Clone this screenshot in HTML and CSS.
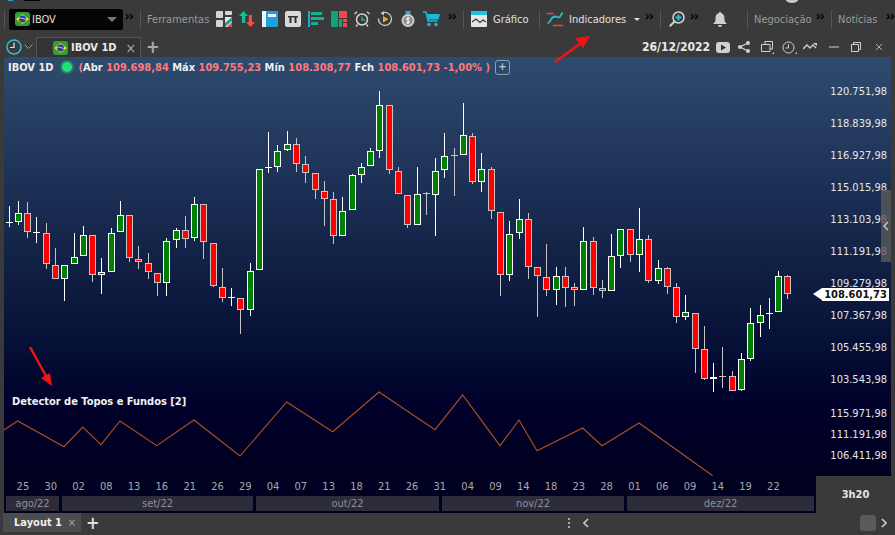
FILE: index.html
```html
<!DOCTYPE html>
<html lang="en">

<head>
    <meta charset="UTF-8">
    <meta name="viewport" content="width=device-width, initial-scale=1.0">
    <title>IBOV 1D</title>
    <link rel="stylesheet" href="styles.css">
</head>

<body>
    <!-- Shared small icons -->
    <svg class="defs" width="0" height="0">
        <symbol id="more" viewBox="0 0 9 7">
            <path d="M1 1l2.500 2.500L1 6M5 1l2.500 2.500L5 6" fill="none" stroke="#000" stroke-width="1.500"/>
            <path d="M1 1l2.500 2.500M5 1l2.500 2.500" fill="none" stroke="#5a1a1a" stroke-width=".6"/>
        </symbol>
        <symbol id="flag" viewBox="0 0 15 14">
            <rect width="15" height="14" rx="3" fill="#2f9e3f"/>
            <path d="M7.500 2L14 7l-6.500 5L1 7z" fill="#f4d21f"/>
            <circle cx="7.500" cy="7" r="3.400" fill="#27408f"/>
            <path d="M4.300 6.200q3.500-.5 6.300 1.500" fill="none" stroke="#fff" stroke-width=".7"/>
        </symbol>
    </svg>

    <!-- Top toolbar -->
    <div class="toolbar">
        <div class="sec sec-asset">
            <div class="combo">
                <svg class="flag"><use href="#flag"/></svg>
                <span class="combo-name">IBOV</span>
                <span class="caret"></span>
            </div>
            <svg class="more"><use href="#more"/></svg>
        </div>

        <div class="sec sec-tools">
            <span class="tool-label">Ferramentas</span>
            <div class="tool-icons">
                <svg class="ico" viewBox="0 0 16 16">
                    <rect y="0" width="7" height="7" rx="1" fill="#d5d5d5"/>
                    <rect x="9" y="0" width="7" height="4" rx="1" fill="#d5d5d5"/>
                    <rect y="9" width="7" height="7" rx="1" fill="#d5d5d5"/>
                    <rect x="9" y="6" width="7" height="10" fill="#e8e8e8"/>
                    <path d="M9 16V12l7-6v4z" fill="#1aa38a"/>
                    <path d="M11 16l5-5v5z" fill="#ef4a4a"/>
                </svg>
                <svg class="ico" viewBox="0 0 16 16">
                    <path d="M4.500 0L9 5H6.200v7H3V5H0z" fill="#12c09a"/>
                    <path d="M11.500 16L7 11h2.800V4H13v7h3z" fill="#f0503f"/>
                </svg>
                <svg class="ico" viewBox="0 0 16 16">
                    <rect width="16" height="16" rx="1" fill="#1e9fe0"/>
                    <rect x="0" width="4" height="16" fill="#e9f6fc"/>
                    <rect x="6" y="3" width="8" height="3" fill="#e9f6fc"/>
                </svg>
                <svg class="ico" viewBox="0 0 16 16">
                    <rect width="16" height="16" rx="2" fill="#d8d8d8"/>
                    <path d="M3 5h10v1.500h-1.500V12h-2V6.500h-3V12h-2V6.500H3z" fill="#333"/>
                </svg>
                <svg class="ico" viewBox="0 0 16 16">
                    <rect width="2" height="16" fill="#1ea7e0"/>
                    <rect x="3" y="1" width="11" height="3" fill="#0fb58f"/>
                    <rect x="3" y="6" width="13" height="3" fill="#0fb58f"/>
                    <rect x="3" y="11" width="7" height="3" fill="#0fb58f"/>
                </svg>
                <svg class="ico" viewBox="0 0 16 16">
                    <rect width="7" height="16" rx="1" fill="#0fa27c"/>
                    <rect x="8" width="8" height="7" fill="#ef4a4a"/>
                    <rect x="8" y="8" width="3" height="8" fill="#0fa27c"/>
                    <rect x="12" y="8" width="4" height="3" fill="#ef4a4a"/>
                    <rect x="12" y="12" width="4" height="4" fill="#ef4a4a"/>
                </svg>
                <svg class="ico" viewBox="0 0 16 16">
                    <circle cx="8" cy="8.500" r="5.500" fill="none" stroke="#d5d5d5" stroke-width="1.500"/>
                    <path d="M8 5.500v3.500h3" fill="none" stroke="#12c09a" stroke-width="1.300"/>
                    <path d="M0.500 3L3 0.700M15.500 3L13 0.700M3.500 13.500L2 15.500M12.500 13.500L14 15.500" stroke="#d5d5d5" stroke-width="1.300"/>
                </svg>
                <svg class="ico" viewBox="0 0 16 16">
                    <path d="M5 2.200a6.500 6.500 0 1 1-3.500 5.300" fill="none" stroke="#c9c9c9" stroke-width="1.300"/>
                    <path d="M7 0v4.500L3.500 2.200z" fill="#c9c9c9"/>
                    <path d="M6 5l5.500 3.300L6 11.500z" fill="#e8ad22"/>
                </svg>
                <svg class="ico" viewBox="0 0 16 16">
                    <path d="M5 0h6l-1 4H6z" fill="#2aa7c9"/>
                    <circle cx="8" cy="9.500" r="6.500" fill="#cfcfcf"/>
                    <circle cx="8" cy="9.500" r="4.600" fill="#8b8b8b"/>
                    <path d="M10 7.500q-2-1.200-3.200 0t1.200 2 1.200 2-3.200 0M8 5.800v7.400" fill="none" stroke="#fff" stroke-width="1"/>
                </svg>
                <svg class="ico ico-cart" viewBox="0 0 17 16">
                    <path d="M0 1h3l2 9h9.500" fill="none" stroke="#1fb6d8" stroke-width="1.500"/>
                    <path d="M4 3h13l-1.500 5.500H5z" fill="#1fb6d8"/>
                    <circle cx="6" cy="13.500" r="1.800" fill="#1fb6d8"/>
                    <circle cx="13" cy="13.500" r="1.800" fill="#1fb6d8"/>
                </svg>
            </div>
            <svg class="more"><use href="#more"/></svg>
        </div>

        <div class="sec sec-chart">
            <svg class="ico" viewBox="0 0 16 16">
                <rect width="16" height="16" rx="1" fill="#e6e6e6"/>
                <path d="M0 1a1 1 0 0 1 1-1h14a1 1 0 0 1 1 1v3H0z" fill="#1fc0e8"/>
                <path d="M1 11l4-3 4 3.500 3-2.500 3 2" fill="none" stroke="#333" stroke-width="1.200"/>
            </svg>
            <span class="tool-text">Gráfico</span>
        </div>

        <div class="sec sec-ind">
            <svg class="ico" viewBox="0 0 16 16">
                <path d="M0 2.500h6.500M6 14.500h10" stroke="#ef4a4a" stroke-width="1.500"/>
                <path d="M0.500 12.500c3.500-1 3-7 7.500-7s3 4 7.500-4" fill="none" stroke="#1fc0c8" stroke-width="1.800"/>
            </svg>
            <span class="tool-text">Indicadores</span>
            <span class="caret caret-light"></span>
            <svg class="more"><use href="#more"/></svg>
        </div>

        <div class="sec sec-search">
            <svg class="ico" viewBox="0 0 16 16">
                <circle cx="9.500" cy="6.500" r="5.500" fill="none" stroke="#d5d5d5" stroke-width="1.500"/>
                <path d="M5.500 10.500L.8 15.200" stroke="#d5d5d5" stroke-width="2"/>
                <path d="M9.500 3.500v6M6.500 6.500h6" stroke="#1fc0e8" stroke-width="2"/>
            </svg>
            <svg class="more"><use href="#more"/></svg>
            <svg class="ico bell" viewBox="0 0 14 15">
                <path d="M7 0a1.200 1.200 0 0 1 1.200 1.300C11 2 11.500 4.500 11.500 7c0 2.500 1 3.500 2.500 5H0c1.500-1.500 2.500-2.500 2.500-5 0-2.500.5-5 3.300-5.700A1.200 1.200 0 0 1 7 0zM5 13h4a2 2 0 0 1-4 0z" fill="#cfcfcf"/>
            </svg>
        </div>

        <div class="sec sec-neg">
            <span class="tool-label">Negociação</span>
            <svg class="more"><use href="#more"/></svg>
        </div>

        <div class="sec sec-news">
            <span class="tool-label">Notícias</span>
            <svg class="more"><use href="#more"/></svg>
        </div>
    </div>

    <!-- Chart tab row -->
    <div class="tabbar">
        <svg class="clock" viewBox="0 0 16 16">
            <circle cx="8" cy="8" r="7" fill="none" stroke="#2cc0e0" stroke-width="1.500"/>
            <path d="M8 3.500V8.500H4" fill="none" stroke="#e0e0e0" stroke-width="1.200"/>
        </svg>
        <svg class="chevron" viewBox="0 0 9 5"><path d="M.5.500l4 4 4-4" fill="none" stroke="#999"/></svg>
        <div class="tab">
            <svg class="flag"><use href="#flag"/></svg>
            <span class="tab-name">IBOV 1D</span>
            <span class="tab-close">×</span>
        </div>
        <span class="tab-add">+</span>
        <div class="win-tools">
            <span class="date">26/12/2022</span>
            <svg class="wt wt-video" viewBox="0 0 14 11">
                <rect width="14" height="11" rx="3" fill="#d0d0d0"/>
                <path d="M5 2.500l5 3-5 3z" fill="#333"/>
            </svg>
            <svg class="wt wt-share" viewBox="0 0 12 12">
                <path d="M10 2L2 6l8 4" fill="none" stroke="#d0d0d0" stroke-width="1.300"/>
                <circle cx="10" cy="2" r="2" fill="#d0d0d0"/>
                <circle cx="2" cy="6" r="2" fill="#d0d0d0"/>
                <circle cx="10" cy="10" r="2" fill="#d0d0d0"/>
            </svg>
            <svg class="wt wt-layers" viewBox="0 0 13 13">
                <path d="M4 3V.5h7.500V8H9M.5 3.500H9v7H.5z" fill="none" stroke="#d0d0d0"/>
                <path d="M13 11v2h-2z" fill="#d0d0d0"/>
            </svg>
            <svg class="wt wt-time" viewBox="0 0 15 13">
                <circle cx="6.500" cy="6.500" r="5.500" fill="none" stroke="#d0d0d0"/>
                <path d="M6.500 3v4H3.500" fill="none" stroke="#d0d0d0"/>
                <path d="M15 11v2h-2z" fill="#d0d0d0"/>
            </svg>
            <svg class="wt wt-trend" viewBox="0 0 15 10">
                <path d="M0 7l4-4 3 3 3-3 3 3" fill="none" stroke="#d0d0d0" stroke-width="1.300"/>
                <path d="M10 1h4v3z" fill="#d0d0d0"/>
            </svg>
            <svg class="wt wt-min" viewBox="0 0 10 10"><path d="M0 5h10" stroke="#d0d0d0"/></svg>
            <svg class="wt wt-restore" viewBox="0 0 10 10">
                <path d="M2.500 2V.5h7v7H8M.5 2.500h7v7h-7z" fill="none" stroke="#d0d0d0"/>
            </svg>
            <svg class="wt wt-close" viewBox="0 0 10 10"><path d="M1 1l8 8M9 1l-8 8" stroke="#d0d0d0"/></svg>
        </div>
    </div>

    <!-- Chart -->
    <div class="chart-row">
        <div class="chart">
            <svg id="candles" class="plot" viewBox="4 57 887 456">
                <polyline class="detector" points="4,430 17.700,421 64,446.700 82.700,427 101,444.700 120,421 156.700,445.700 194,420 240,456 286.700,402 332.700,431.700 379,392 435,429.700 462.700,395 500,445.700 519,420 537,450.700 582.700,428 602,445.700 639,423 712.700,475.700"/>
            </svg>

            <div class="legend">
                <span class="legend-name">IBOV 1D</span>
                <span class="live-dot"></span>
                <span class="ohlc"><i>(</i>Abr <i>109.698,84</i> Máx <i>109.755,23</i> Mín <i>108.308,77</i> Fch <i>108.601,73 -1,00% )</i></span>
                <span class="legend-add">+</span>
            </div>

            <div class="indicator-name">Detector de Topos e Fundos [2]</div>

            <div class="prices prices-main">
                <span>120.751,98</span>
                <span>118.839,98</span>
                <span>116.927,98</span>
                <span>115.015,98</span>
                <span>113.103,98</span>
                <span>111.191,98</span>
                <span>109.279,98</span>
                <span>107.367,98</span>
                <span>105.455,98</span>
                <span>103.543,98</span>
            </div>
            <div class="prices prices-sub">
                <span>115.971,98</span>
                <span>111.191,98</span>
                <span>106.411,98</span>
            </div>

            <div class="last-price">108.601,73</div>
            <div class="side-handle"><svg viewBox="0 0 6 10"><path d="M5 1L1 5l4 4" fill="none" stroke="#c8c8c8" stroke-width="1.500"/></svg></div>

            <div class="time-axis">
                <div class="days">
                    <span>25</span><span>30</span><span>02</span><span>08</span><span>13</span><span>16</span><span>21</span>
                    <span>26</span><span>29</span><span>04</span><span>07</span><span>13</span><span>18</span><span>21</span>
                    <span>26</span><span>31</span><span>04</span><span>09</span><span>14</span><span>18</span><span>23</span>
                    <span>28</span><span>01</span><span>06</span><span>09</span><span>14</span><span>19</span><span>22</span>
                </div>
                <div class="months">
                    <span class="m-ago">ago/22</span>
                    <span class="m-set">set/22</span>
                    <span class="m-out">out/22</span>
                    <span class="m-nov">nov/22</span>
                    <span class="m-dez">dez/22</span>
                </div>
            </div>

            <div class="clock-box">3h20</div>
        </div>
    </div>

    <!-- Layout tabs -->
    <div class="layoutbar">
        <div class="layout-tab">
            <span class="layout-name">Layout 1</span>
            <span class="layout-close">×</span>
        </div>
        <span class="layout-add">+</span>
        <span class="dots"></span>
        <svg class="nav nav-left" viewBox="0 0 6 10"><path d="M5 1L1 5l4 4" fill="none" stroke="#ccc" stroke-width="1.600"/></svg>
        <span class="thumb"></span>
        <svg class="nav" viewBox="0 0 6 10"><path d="M1 1l4 4-4 4" fill="none" stroke="#ccc" stroke-width="1.600"/></svg>
    </div>

    <!-- Red arrows drawn over the screenshot, plus the bits of another window along the top edge -->
    <svg class="marks" viewBox="0 0 895 535">
        <rect x="8" y="0" width="5" height="1" fill="#2c9fc0"/>
        <rect x="24" y="0" width="16" height="1" fill="#050505"/>
        <ellipse cx="792" cy="0" rx="6" ry="3" fill="#c8c8d0"/>
        <path d="M555 62L581 43" stroke="#f01414" stroke-width="2.500"/>
        <path d="M590 36L583 48 575 38z" fill="#f01414"/>
        <path d="M30 347L46 376" stroke="#f01414" stroke-width="2.500"/>
        <path d="M52 386L41 378 50 373z" fill="#f01414"/>
    </svg>

    <script src="script.js"></script>
</body>

</html>
```

FILE: styles.css
```css
/* General Reset */
* {
    box-sizing: border-box;
}

body {
    margin: 0;
    width: 895px;
    height: 535px;
    overflow: hidden;
    position: relative;
    display: flex;
    flex-direction: column;
    background: #3a3a3a;
    color: #ddd;
    font-family: "DejaVu Sans Condensed", "DejaVu Sans", Arial, sans-serif;
    font-stretch: condensed;
    font-size: 11px;
}

.defs {
    position: absolute;
}

svg {
    display: block;
    flex: none;
}

.flag {
    width: 15px;
    height: 14px;
}

.more {
    width: 9px;
    height: 7px;
    margin-left: auto;
    margin-bottom: 6px;
}

.ico {
    width: 16px;
    height: 16px;
}

.caret {
    width: 0;
    height: 0;
    border-left: 5px solid transparent;
    border-right: 5px solid transparent;
    border-top: 5px solid #777;
}

.caret-light {
    border-left-width: 3px;
    border-right-width: 3px;
    border-top: 3px solid #ddd;
    margin-left: 8px;
}

/* Top toolbar */
.toolbar {
    height: 33px;
    padding: 5px 0 0 4px;
    display: flex;
    align-items: center;
    flex: none;
}

.sec {
    height: 18px;
    display: flex;
    align-items: center;
    border-left: 1px solid #555;
    padding: 0 6px 0 4px;
}

.sec-asset { width: 136px; }
.sec-tools { width: 323px; padding-left: 6px; }
.sec-chart { width: 76px; padding-left: 7px; }
.sec-ind { width: 121px; padding-left: 7px; }
.sec-search { width: 87px; padding-left: 8px; }
.sec-neg { width: 84px; padding-left: 6px; }
.sec-news { width: 64px; padding-left: 6px; padding-right: 0; }

.combo {
    width: 114px;
    height: 21px;
    background: #050505;
    border-radius: 2px;
    display: flex;
    align-items: center;
    padding: 0 6px;
    flex: none;
}

.combo-name {
    margin-left: 2px;
    color: #e0e0e0;
    flex: 1;
}

.tool-label {
    color: #9a9a9a;
}

.tool-text {
    color: #e0e0e0;
    margin-left: 6px;
}

.tool-icons {
    display: flex;
    gap: 7px;
    margin-left: auto;
    margin-right: 8px;
}

.ico-cart {
    width: 17px;
}

.sec-tools .more {
    margin-left: 0;
}

.bell {
    width: 14px;
    height: 15px;
    margin-left: 14px;
    margin-right: 21px;
}

.sec-search .more {
    margin-left: 5px;
}

/* Tab row */
.tabbar {
    height: 24px;
    padding: 4px 0 0 6px;
    display: flex;
    align-items: center;
    flex: none;
}

.clock {
    width: 16px;
    height: 16px;
}

.chevron {
    width: 9px;
    height: 5px;
    margin: 0 3px 2px 2px;
}

.tab {
    width: 105px;
    height: 20px;
    background: #333;
    border: 1px solid #555;
    border-bottom: none;
    display: flex;
    align-items: center;
    padding-left: 16px;
    align-self: flex-end;
}

.tab-name {
    margin-left: 3px;
    color: #e8e8e8;
    font-weight: 700;
}

.tab-close {
    margin-left: auto;
    margin-right: 4px;
    color: #aaa;
    font-size: 14px;
}

.tab-add {
    margin-left: 5px;
    color: #aaa;
    font-size: 18px;
    font-weight: 700;
    line-height: 20px;
}

.win-tools {
    margin-left: auto;
    display: flex;
    align-items: center;
    padding-right: 12px;
}

.date {
    color: #e8e8e8;
    font-size: 12px;
    font-weight: 700;
    margin-right: 6px;
}

.wt-video { width: 14px; height: 11px; margin-right: 8px; }
.wt-share { width: 12px; height: 12px; margin-right: 11px; }
.wt-layers { width: 13px; height: 13px; margin-right: 8px; }
.wt-time { width: 15px; height: 13px; margin-right: 6px; }
.wt-trend { width: 15px; height: 10px; margin-right: 11px; }
.wt-min { width: 10px; height: 10px; margin-right: 12px; }
.wt-restore { width: 10px; height: 10px; margin-right: 14px; }
.wt-close { width: 8px; height: 8px; }

/* Chart */
.chart-row {
    flex: 1;
    padding: 0 4px;
    display: flex;
}

.chart {
    flex: 1;
    position: relative;
    background: linear-gradient(to bottom, #2e4b6e 0, #060f35 290px, #00012b 345px, #000020 420px);
}

.plot {
    position: absolute;
    left: 0;
    top: 0;
    width: 887px;
    height: 456px;
}

.detector {
    fill: none;
    stroke: #b0501c;
    stroke-width: 1.100;
}

.legend {
    height: 20px;
    padding-left: 4px;
    display: flex;
    align-items: center;
    position: relative;
    font-weight: 700;
    color: #eee;
}

.live-dot {
    width: 10px;
    height: 10px;
    margin: 0 7px 0 8px;
    border-radius: 50%;
    background: #1fe07a;
    box-shadow: 0 0 0 2px #2c7a66;
}

.ohlc i {
    color: #ff7b7b;
    font-style: normal;
}

.legend-add {
    width: 15px;
    height: 15px;
    margin-left: 5px;
    border: 1px solid #8da0b8;
    border-radius: 3px;
    color: #b8c4d4;
    line-height: 12px;
    text-align: center;
}

.indicator-name {
    position: absolute;
    left: 8px;
    top: 338px;
    color: #f2f2f2;
    font-weight: 700;
}

.prices {
    position: absolute;
    right: 4px;
    display: flex;
    flex-direction: column;
    align-items: flex-end;
    color: #e6e6e6;
}

.prices span {
    height: 32px;
    line-height: 32px;
}

.prices-main {
    top: 19px;
}

.prices-sub {
    top: 346px;
}

.prices-sub span {
    height: 21px;
    line-height: 21px;
}

.last-price {
    position: absolute;
    left: 818px;
    top: 231px;
    width: 67px;
    height: 13px;
    background: #fff;
    color: #111;
    font-weight: 700;
    line-height: 13px;
    text-align: center;
}

.last-price::before {
    content: "";
    position: absolute;
    left: -9px;
    top: 0;
    border-top: 6.500px solid transparent;
    border-bottom: 6.500px solid transparent;
    border-right: 9px solid #fff;
}

.side-handle {
    position: absolute;
    right: 0;
    top: 133px;
    width: 10px;
    height: 72px;
    background: rgba(90, 90, 90, 0.8);
    display: flex;
    align-items: center;
    justify-content: center;
}

.side-handle svg {
    width: 6px;
    height: 10px;
}

/* Time axis */
.time-axis {
    position: absolute;
    left: 0;
    top: 420px;
    width: 812px;
}

.days {
    height: 19px;
    padding-left: 5px;
    display: flex;
    align-items: center;
    color: #aaa;
}

.days span {
    flex: 0 0 27.800px;
    text-align: center;
}

.months {
    height: 15px;
    padding-left: 2px;
    display: flex;
    gap: 3px;
    color: #8f8f99;
}

.months span {
    background: #2c2c3a;
    line-height: 15px;
    text-align: center;
}

.m-ago { width: 53px; }
.m-set { width: 191px; }
.m-out { width: 183px; }
.m-nov { width: 182px; }
.m-dez { width: 187px; }

.clock-box {
    position: absolute;
    left: 812px;
    top: 419px;
    width: 79px;
    height: 37px;
    background: #3a3a3a;
    color: #e6e6e6;
    font-weight: 700;
    line-height: 37px;
    text-align: center;
}

/* Layout tabs */
.layoutbar {
    height: 22px;
    padding: 0 8px 3px 3px;
    display: flex;
    align-items: center;
    flex: none;
}

.layout-tab {
    width: 78px;
    height: 19px;
    background: #4c4c4c;
    display: flex;
    align-items: center;
    padding-left: 11px;
    align-self: flex-start;
}

.layout-name {
    color: #eee;
    font-weight: 700;
}

.layout-close {
    margin-left: auto;
    margin-right: 5px;
    color: #aaa;
}

.layout-add {
    margin-left: 5px;
    color: #ddd;
    font-size: 18px;
    font-weight: 700;
    line-height: 18px;
}

.dots {
    width: 2px;
    height: 10px;
    margin-left: 468px;
    background: repeating-linear-gradient(to bottom, #aaa 0 2px, transparent 2px 4px);
}

.nav {
    width: 6px;
    height: 10px;
}

.nav-left {
    margin-left: 13px;
}

.thumb {
    width: 16px;
    height: 16px;
    margin: 0 5px 0 auto;
    background: #5a5a5a;
    border-radius: 3px;
}

.marks {
    position: absolute;
    left: 0;
    top: 0;
    width: 895px;
    height: 535px;
    pointer-events: none;
}
```

FILE: script.js
```js
// x, high, body top, body bottom, low, kind (g = up, r = down, d = white doji, x = grey doji)
const candles = [
    [9, 206, 222, 222, 227, 'd'], [18, 201, 213, 221, 225, 'g'], [27, 202, 213, 231, 238, 'r'],
    [36, 217, 232, 232, 243, 'd'], [46, 223, 233, 263, 269, 'r'], [55, 248, 265, 278, 278, 'r'],
    [64, 265, 265, 278, 301, 'g'], [74, 233, 257, 263, 263, 'g'], [83, 226, 235, 255, 255, 'g'],
    [92, 235, 235, 274, 282, 'r'], [101, 258, 272, 274, 294, 'g'], [111, 228, 233, 271, 271, 'g'],
    [120, 201, 215, 231, 231, 'g'], [129, 215, 215, 257, 262, 'r'], [138, 246, 259, 261, 269, 'r'],
    [148, 253, 263, 271, 279, 'r'], [157, 273, 273, 282, 296, 'r'], [166, 238, 241, 282, 296, 'g'],
    [176, 228, 230, 239, 248, 'g'], [185, 216, 230, 238, 248, 'r'], [194, 197, 204, 237, 241, 'g'],
    [203, 204, 204, 241, 259, 'r'], [213, 243, 243, 285, 287, 'r'], [222, 268, 287, 297, 302, 'r'],
    [231, 288, 297, 297, 306, 'd'], [240, 298, 298, 309, 334, 'r'], [250, 263, 271, 309, 316, 'g'],
    [259, 169, 169, 269, 269, 'g'], [268, 132, 167, 167, 173, 'd'], [277, 145, 151, 166, 172, 'g'],
    [287, 131, 144, 149, 151, 'g'], [296, 138, 144, 163, 172, 'r'], [305, 156, 164, 172, 183, 'r'],
    [315, 173, 173, 189, 199, 'r'], [324, 181, 191, 198, 226, 'r'], [333, 192, 199, 235, 244, 'r'],
    [342, 197, 211, 235, 235, 'g'], [352, 174, 175, 209, 209, 'g'], [361, 163, 167, 174, 183, 'g'],
    [370, 148, 151, 165, 165, 'g'], [379, 91, 105, 150, 158, 'g'], [389, 105, 105, 169, 174, 'r'],
    [398, 167, 171, 193, 193, 'r'], [407, 195, 195, 224, 228, 'r'], [417, 167, 194, 224, 224, 'g'],
    [426, 192, 193, 195, 215, 'x'], [435, 158, 171, 194, 236, 'g'], [444, 133, 156, 169, 178, 'g'],
    [454, 148, 155, 155, 196, 'x'], [463, 103, 135, 154, 154, 'g'], [472, 133, 136, 181, 184, 'r'],
    [481, 153, 169, 181, 192, 'g'], [491, 167, 169, 210, 219, 'r'], [500, 212, 212, 274, 296, 'r'],
    [509, 221, 234, 274, 281, 'g'], [519, 199, 219, 232, 239, 'g'], [528, 213, 219, 266, 279, 'r'],
    [537, 267, 267, 275, 317, 'r'], [546, 244, 277, 289, 296, 'r'], [556, 267, 276, 289, 305, 'g'],
    [565, 267, 276, 287, 307, 'r'], [574, 283, 287, 289, 306, 'r'], [583, 227, 241, 289, 289, 'g'],
    [593, 237, 241, 287, 295, 'r'], [602, 280, 288, 290, 298, 'r'], [611, 234, 256, 290, 290, 'g'],
    [620, 229, 229, 255, 268, 'g'], [630, 229, 229, 254, 262, 'r'], [639, 208, 239, 254, 272, 'g'],
    [648, 235, 239, 280, 283, 'r'], [658, 260, 268, 280, 284, 'g'], [667, 267, 268, 286, 294, 'r'],
    [676, 283, 287, 316, 323, 'r'], [685, 295, 312, 316, 320, 'g'], [695, 313, 313, 348, 373, 'r'],
    [704, 326, 349, 378, 380, 'r'], [713, 363, 377, 378, 392, 'g'], [722, 347, 376, 376, 388, 'x'],
    [732, 371, 376, 390, 391, 'r'], [741, 353, 359, 389, 391, 'g'], [750, 308, 323, 358, 361, 'g'],
    [760, 305, 315, 322, 337, 'g'], [769, 298, 313, 313, 329, 'd'], [778, 271, 276, 311, 311, 'g'],
    [787, 275, 276, 293, 299, 'r']
];

const NS = 'http://www.w3.org/2000/svg';
const plot = document.getElementById('candles');

function add(tag, attrs) {
    const el = document.createElementNS(NS, tag);
    for (const key in attrs) el.setAttribute(key, attrs[key]);
    el.setAttribute('shape-rendering', 'crispEdges');
    plot.appendChild(el);
}

candles.forEach(function (c) {
    const [x, high, top, bottom, low, kind] = c;
    const edge = kind === 'g' || kind === 'd' ? '#ffffff' : '#c4c4c4';
    const mid = x + 0.5;

    add('line', { x1: mid, x2: mid, y1: high, y2: low, stroke: edge });

    if (kind === 'd' || kind === 'x') {
        add('line', { x1: x - 3, x2: x + 4, y1: top + 0.5, y2: top + 0.5, stroke: edge });
    } else {
        add('rect', {
            x: x - 2.5,
            y: top + 0.5,
            width: 6,
            height: Math.max(bottom - top, 1),
            fill: kind === 'g' ? '#008000' : '#ff0000',
            stroke: edge
        });
    }
});
```
